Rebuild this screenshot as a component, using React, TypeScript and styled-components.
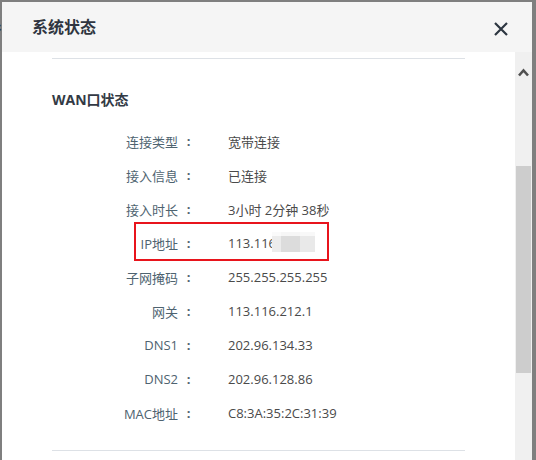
import React from "react";
import styled, { createGlobalStyle } from "styled-components";

const Global = createGlobalStyle`
  html, body { margin: 0; padding: 0; }
  body {
    background: #7f7f7f;
    font-family: "Open Sans", "Noto Sans CJK SC", sans-serif;
    overflow: hidden;
  }
`;

const Screen = styled.div`
  display: flex;
  padding-top: 2px;
  height: 460px;
  box-sizing: border-box;
  overflow: hidden;
`;

const BackStrip = styled.div`
  width: 2px;
  overflow: hidden;
  flex: none;
  padding-top: 11px;
  box-sizing: border-box;
`;

const BackGlyph = styled.span`
  display: block;
  margin-left: -14px;
  font-family: "Noto Sans CJK SC", sans-serif;
  font-size: 16px;
  font-weight: 700;
  color: #2e3540;
  line-height: 20px;
  white-space: nowrap;
`;

const Dialog = styled.div`
  width: 530px;
  flex: none;
  display: flex;
  flex-direction: column;
  background: #fff;
`;

const Header = styled.div`
  height: 50px;
  flex: none;
  background: #f5f5f5;
  display: flex;
  align-items: center;
  justify-content: space-between;
  padding: 0 24px 0 30px;
`;

const Title = styled.h1`
  margin: 0;
  font-family: "Noto Sans CJK SC", sans-serif;
  font-size: 16px;
  font-weight: 600;
  color: #2f3540;
  line-height: 22px;
  margin-top: -2px;
`;

const CloseButton = styled.button`
  border: 0;
  background: transparent;
  padding: 0;
  width: 14px;
  height: 14px;
  display: flex;
  align-items: center;
  justify-content: center;
  margin-top: 4px;
  cursor: pointer;
`;

const Body = styled.div`
  flex: 1;
  display: flex;
  min-height: 0;
`;

const Content = styled.div`
  flex: 1;
  padding: 6px 50px 0 50px;
`;

const Divider = styled.div`
  height: 1px;
  background: #dde1e6;
`;

const SectionTitle = styled.h2`
  margin: 31px 0 14px;
  font-size: 14px;
  font-weight: 700;
  color: #333a45;
  line-height: 20px;
`;

const InfoList = styled.div`
  display: flex;
  flex-direction: column;
  margin-bottom: 20px;
`;

const Row = styled.div`
  position: relative;
  display: grid;
  grid-template-columns: 126px 21px 1fr;
  height: 34px;
  align-items: center;
  font-size: 13px;
`;

const Label = styled.span`
  text-align: right;
  color: #4e6370;
  white-space: nowrap;
`;

const Colon = styled.span`
  text-align: center;
  color: #4e6370;
  font-weight: 700;
`;

const Value = styled.span`
  padding-left: 29px;
  color: #4a4a4a;
  white-space: nowrap;
`;

const Highlight = styled.div`
  position: absolute;
  left: 82px;
  top: -4px;
  width: 195px;
  height: 39px;
  box-sizing: border-box;
  border: 2px solid #e8141c;
  pointer-events: none;
`;

const Mosaic = styled.div`
  position: absolute;
  left: 220px;
  top: 6px;
  width: 43px;
  height: 20px;
  display: grid;
  grid-template-columns: 9px 19px 15px;
  grid-template-rows: 4px 16px;
`;

const Cell = styled.div<{ $tone: string }>`
  background: ${(p) => p.$tone};
`;

const ScrollTrack = styled.div`
  width: 17px;
  flex: none;
  background: #f0f0f0;
  display: flex;
  flex-direction: column;
  align-items: center;
`;

const ScrollArrow = styled.div`
  height: 17px;
  margin-top: 12px;
  display: flex;
  align-items: center;
  justify-content: center;
`;

const ScrollThumb = styled.div`
  width: 15px;
  height: 207px;
  margin-top: 85px;
  background: #cdcdcd;
`;

const RightStrip = styled.div`
  width: 4px;
  flex: none;
`;

const rows: { label: string; value: string; highlight?: boolean }[] = [
  { label: "连接类型", value: "宽带连接" },
  { label: "接入信息", value: "已连接" },
  { label: "接入时长", value: "3小时 2分钟 38秒" },
  { label: "IP地址", value: "113.116", highlight: true },
  { label: "子网掩码", value: "255.255.255.255" },
  { label: "网关", value: "113.116.212.1" },
  { label: "DNS1", value: "202.96.134.33" },
  { label: "DNS2", value: "202.96.128.86" },
  { label: "MAC地址", value: "C8:3A:35:2C:31:39" },
];

const mosaicTones = ["#fafafa", "#f6f6f6", "#f8f8f8", "#ececec", "#dcdcdc", "#e9e9e9"];

export default function App() {
  return (
    <>
      <Global />
      <Screen>
        <BackStrip>
          <BackGlyph>系</BackGlyph>
        </BackStrip>
        <Dialog>
          <Header>
            <Title>系统状态</Title>
            <CloseButton aria-label="关闭">
              <svg width="14" height="14" viewBox="0 0 14 14">
                <path d="M1 1 L13 13 M13 1 L1 13" stroke="#2d3641" strokeWidth="2.2" strokeLinecap="butt" fill="none" />
              </svg>
            </CloseButton>
          </Header>
          <Body>
            <Content>
              <Divider />
              <SectionTitle>WAN口状态</SectionTitle>
              <InfoList>
                {rows.map((r) => (
                  <Row key={r.label}>
                    <Label>{r.label}</Label>
                    <Colon>:</Colon>
                    <Value>{r.value}</Value>
                    {r.highlight && (
                      <>
                        <Mosaic>
                          {mosaicTones.map((t, i) => (
                            <Cell key={i} $tone={t} />
                          ))}
                        </Mosaic>
                        <Highlight />
                      </>
                    )}
                  </Row>
                ))}
              </InfoList>
              <Divider />
            </Content>
            <ScrollTrack>
              <ScrollArrow>
                <svg width="11" height="9" viewBox="0 0 11 9">
                  <path d="M1 7.5 L5.5 2.5 L10 7.5" stroke="#505050" strokeWidth="2.6" fill="none" />
                </svg>
              </ScrollArrow>
              <ScrollThumb />
            </ScrollTrack>
          </Body>
        </Dialog>
        <RightStrip />
      </Screen>
    </>
  );
}
